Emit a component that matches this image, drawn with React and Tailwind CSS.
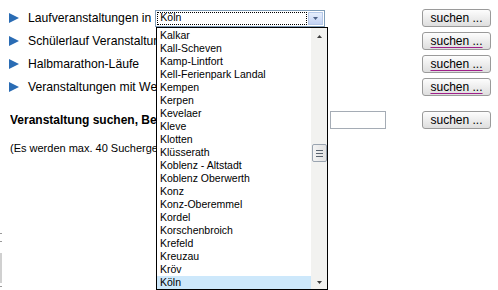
import React from "react";

const items = [
  "Kalkar",
  "Kall-Scheven",
  "Kamp-Lintfort",
  "Kell-Ferienpark Landal",
  "Kempen",
  "Kerpen",
  "Kevelaer",
  "Kleve",
  "Klotten",
  "Klüsserath",
  "Koblenz - Altstadt",
  "Koblenz Oberwerth",
  "Konz",
  "Konz-Oberemmel",
  "Kordel",
  "Korschenbroich",
  "Krefeld",
  "Kreuzau",
  "Kröv",
  "Köln",
];

function Arrow() {
  return (
    <svg width="10" height="10" viewBox="0 0 10 10" className="shrink-0">
      <polygon points="0,0 10,5 0,10" fill="#2a6cb4" />
    </svg>
  );
}

function Btn({ visited }) {
  return (
    <button className="w-[69px] h-[18px] rounded-[3px] border border-[#9a9a9a] bg-gradient-to-b from-[#fdfdfd] to-[#dedede] text-[12px] leading-[14px] text-black flex items-center justify-center">
      <span
        className={
          visited
            ? "underline decoration-[#a0208a] underline-offset-[2px]"
            : ""
        }
      >
        suchen ...
      </span>
    </button>
  );
}

function Row({ text, visited, children }) {
  return (
    <div className="flex items-center h-[18px] mb-[5px]">
      <div className="w-[422px] flex items-center overflow-hidden">
        <div className="ml-[9px]">
          <Arrow />
        </div>
        <span className="ml-[9px] text-[12.2px] whitespace-nowrap">{text}</span>
        {children}
      </div>
      <Btn visited={visited} />
    </div>
  );
}

export default function App() {
  return (
    <div className="relative w-[498px] h-[290px] overflow-hidden bg-white text-black font-['Liberation_Sans',Arial,sans-serif]">
      <div className="pt-[9px]">
        <Row text="Laufveranstaltungen in">
          <div className="ml-[4px] w-[170px] h-[17px] border border-[#7f9db9] bg-white flex items-center">
            <div className="ml-[1px] flex-1 h-[13px] border border-dotted border-black flex items-center text-[10.5px] pl-[2px]">
              Köln
            </div>
            <div className="ml-[1px] mr-[1px] w-[15px] h-[13px] border border-[#b5c8e8] bg-gradient-to-b from-[#e6eefc] to-[#c3d3f5] flex items-center justify-center">
              <svg width="5" height="3" viewBox="0 0 5 3">
                <polygon points="0,0 5,0 2.5,3" fill="#4d6185" />
              </svg>
            </div>
          </div>
        </Row>
        <Row text="Schülerlauf Veranstaltungen in" visited />
        <Row text="Halbmarathon-Läufe" visited />
        <Row text="Veranstaltungen mit Wertung" visited />
        <div className="flex items-center h-[18px] mt-[15px]">
          <div className="w-[422px] flex items-center">
            <span className="ml-[10px] text-[12px] font-bold whitespace-nowrap w-[320px] overflow-hidden">
              Veranstaltung suchen, Bezeichnung oder Ort:
            </span>
            <div className="w-[56px] h-[18px] border border-[#a5acb5] bg-white" />
          </div>
          <Btn />
        </div>
        <div className="ml-[10px] mt-[11px] text-[11px] leading-[16px] whitespace-nowrap">
          (Es werden max. 40 Suchergebnisse angezeigt)
        </div>
        <div className="mt-[77px] flex flex-col">
          <div className="w-[2px] h-[1px] bg-[#9a9a9a]" />
          <div className="mt-[7px] w-[2px] h-[1px] bg-[#9a9a9a]" />
          <div className="mt-[11px] w-[2px] h-[30px] bg-[#d0d0d0]" />
          <div className="mt-[3px] w-[2px] h-[1px] bg-[#9a9a9a]" />
        </div>
      </div>

      <div className="absolute left-[156px] top-[27px] w-[172px] border border-black bg-white flex">
        <div className="flex-1 pt-[1px]">
          {items.map((it) => (
            <div
              key={it}
              className={
                "h-[13px] leading-[13px] pl-[3px] text-[10.5px] whitespace-nowrap " +
                (it === "Köln" ? "bg-[#cde8fb]" : "")
              }
            >
              {it}
            </div>
          ))}
        </div>
        <div className="w-[16px] bg-[#f2f2f0] flex flex-col items-center">
          <div className="h-[16px] w-full flex items-center justify-center">
            <svg width="5" height="3" viewBox="0 0 5 3">
              <polygon points="2.5,0 5,3 0,3" fill="#3c3c3c" />
            </svg>
          </div>
          <div className="h-[100px]" />
          <div className="w-[15px] h-[18px] rounded-[2px] border border-[#9aa4b0] bg-gradient-to-r from-[#f4f4f4] to-[#e2e2e2] flex flex-col items-center justify-center gap-[2px]">
            <div className="w-[7px] h-[1px] bg-[#5a6470]" />
            <div className="w-[7px] h-[1px] bg-[#5a6470]" />
            <div className="w-[7px] h-[1px] bg-[#5a6470]" />
          </div>
          <div className="flex-1" />
          <div className="h-[14px] w-full flex items-center justify-center">
            <svg width="5" height="3" viewBox="0 0 5 3">
              <polygon points="0,0 5,0 2.5,3" fill="#3c3c3c" />
            </svg>
          </div>
        </div>
      </div>
    </div>
  );
}
